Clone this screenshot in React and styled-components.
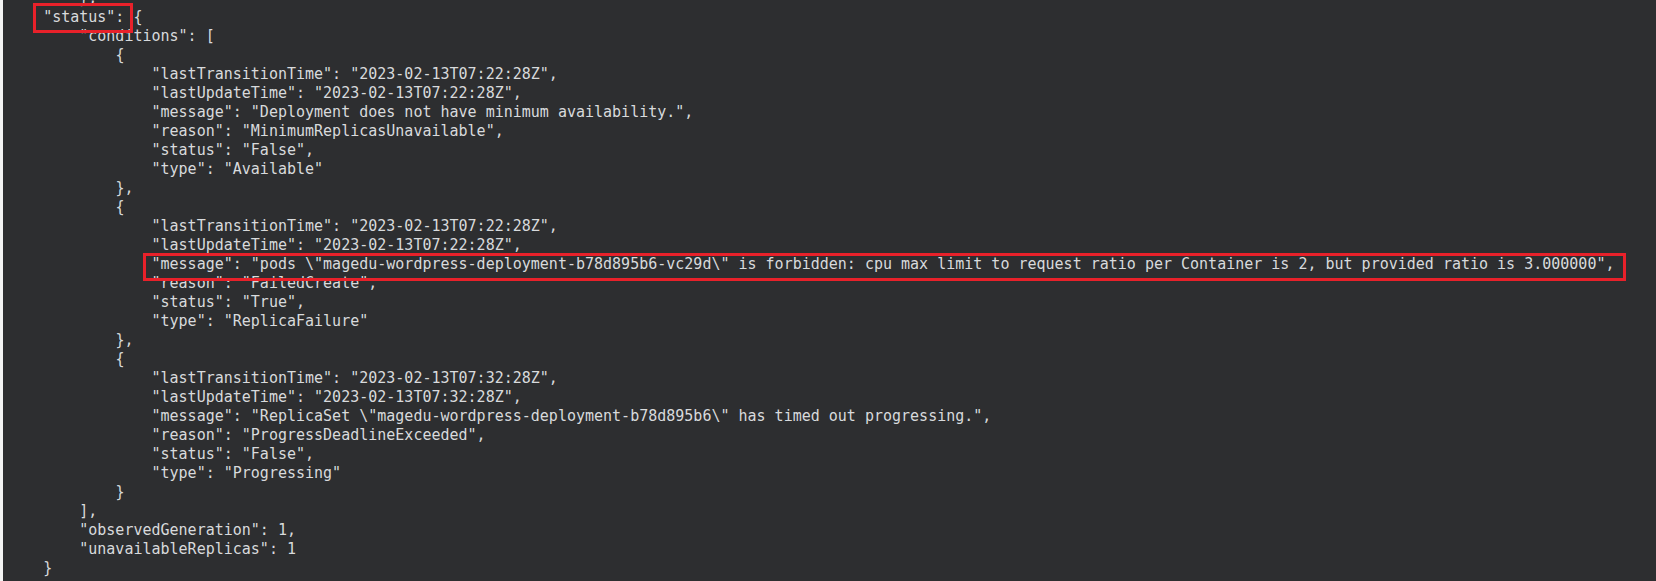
import React from 'react';
import styled, { createGlobalStyle } from 'styled-components';

const GlobalStyle = createGlobalStyle`
  html, body {
    margin: 0;
    padding: 0;
    background: #f4f4f4;
    overflow: hidden;
  }
`;

const Terminal = styled.div`
  height: 581px;
  margin-left: 3px;
  background: #2d2e30;
  overflow: hidden;
  padding-left: 4px;
`;

const Code = styled.pre`
  margin: -11px 0 0 0;
  font-family: 'DejaVu Sans Mono', 'Liberation Mono', monospace;
  font-size: 15px;
  line-height: 19px;
  color: #d8dadc;
  white-space: pre;
`;

const Line = styled.div`
  height: 19px;
`;

// red annotation boxes drawn over the text
const Mark = styled.span`
  position: relative;
  &::after {
    content: '';
    position: absolute;
    top: ${(p) => p.$box.top}px;
    bottom: ${(p) => p.$box.bottom}px;
    left: ${(p) => p.$box.left}px;
    right: ${(p) => p.$box.right}px;
    border: 3px solid #e8212a;
    pointer-events: none;
  }
`;

const keyBox = { top: -5, bottom: -7, left: -10, right: -9 };
const lineBox = { top: -2, bottom: -8, left: -9, right: -12 };

const lines = [
  [2, '},'],
  [1, '"status":', ' {', keyBox],
  [2, '"conditions": ['],
  [3, '{'],
  [4, '"lastTransitionTime": "2023-02-13T07:22:28Z",'],
  [4, '"lastUpdateTime": "2023-02-13T07:22:28Z",'],
  [4, '"message": "Deployment does not have minimum availability.",'],
  [4, '"reason": "MinimumReplicasUnavailable",'],
  [4, '"status": "False",'],
  [4, '"type": "Available"'],
  [3, '},'],
  [3, '{'],
  [4, '"lastTransitionTime": "2023-02-13T07:22:28Z",'],
  [4, '"lastUpdateTime": "2023-02-13T07:22:28Z",'],
  [
    4,
    '"message": "pods \\"magedu-wordpress-deployment-b78d895b6-vc29d\\" is forbidden: cpu max limit to request ratio per Container is 2, but provided ratio is 3.000000",',
    '',
    lineBox,
  ],
  [4, '"reason": "FailedCreate",'],
  [4, '"status": "True",'],
  [4, '"type": "ReplicaFailure"'],
  [3, '},'],
  [3, '{'],
  [4, '"lastTransitionTime": "2023-02-13T07:32:28Z",'],
  [4, '"lastUpdateTime": "2023-02-13T07:32:28Z",'],
  [4, '"message": "ReplicaSet \\"magedu-wordpress-deployment-b78d895b6\\" has timed out progressing.",'],
  [4, '"reason": "ProgressDeadlineExceeded",'],
  [4, '"status": "False",'],
  [4, '"type": "Progressing"'],
  [3, '}'],
  [2, '],'],
  [2, '"observedGeneration": 1,'],
  [2, '"unavailableReplicas": 1'],
  [1, '}'],
];

export default function App() {
  return (
    <>
      <GlobalStyle />
      <Terminal>
        <Code>
          {lines.map(([indent, text, rest, box], i) => (
            <Line key={i}>
              {' '.repeat(indent * 4)}
              {box ? <Mark $box={box}>{text}</Mark> : text}
              {rest}
            </Line>
          ))}
        </Code>
      </Terminal>
    </>
  );
}
